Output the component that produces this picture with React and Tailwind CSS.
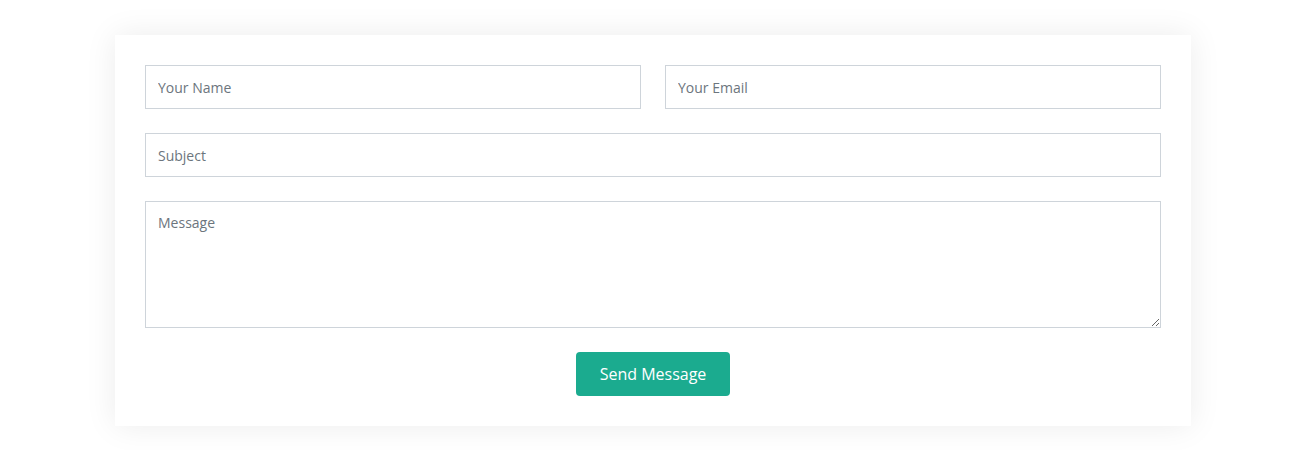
import React from "react";

export default function App() {
  const field =
    "w-full h-[44px] border border-[#ced4da] bg-white px-3 text-[14px] text-[#444] placeholder-[#6c757d] outline-none rounded-none";

  return (
    <div className="min-h-screen bg-white pt-[35px] pl-[115px] font-['Open_Sans',sans-serif]">
      <div className="w-[1076px] bg-white p-[30px] shadow-[0_0_30px_rgba(0,0,0,0.08)]">
        <form onSubmit={(e) => e.preventDefault()} className="flex flex-col gap-6">
          <div className="grid grid-cols-2 gap-6">
            <input type="text" placeholder="Your Name" className={field} />
            <input type="email" placeholder="Your Email" className={field} />
          </div>
          <input type="text" placeholder="Subject" className={field} />
          <textarea
            placeholder="Message"
            className="block w-full h-[127px] border border-[#ced4da] bg-white px-3 py-[10px] text-[14px] text-[#444] placeholder-[#6c757d] outline-none rounded-none"
          />
          <div className="flex justify-center">
            <button
              type="submit"
              className="h-[44px] w-[154px] rounded-[4px] bg-[#1bab8f] text-[16px] text-white"
            >
              Send Message
            </button>
          </div>
        </form>
      </div>
    </div>
  );
}
